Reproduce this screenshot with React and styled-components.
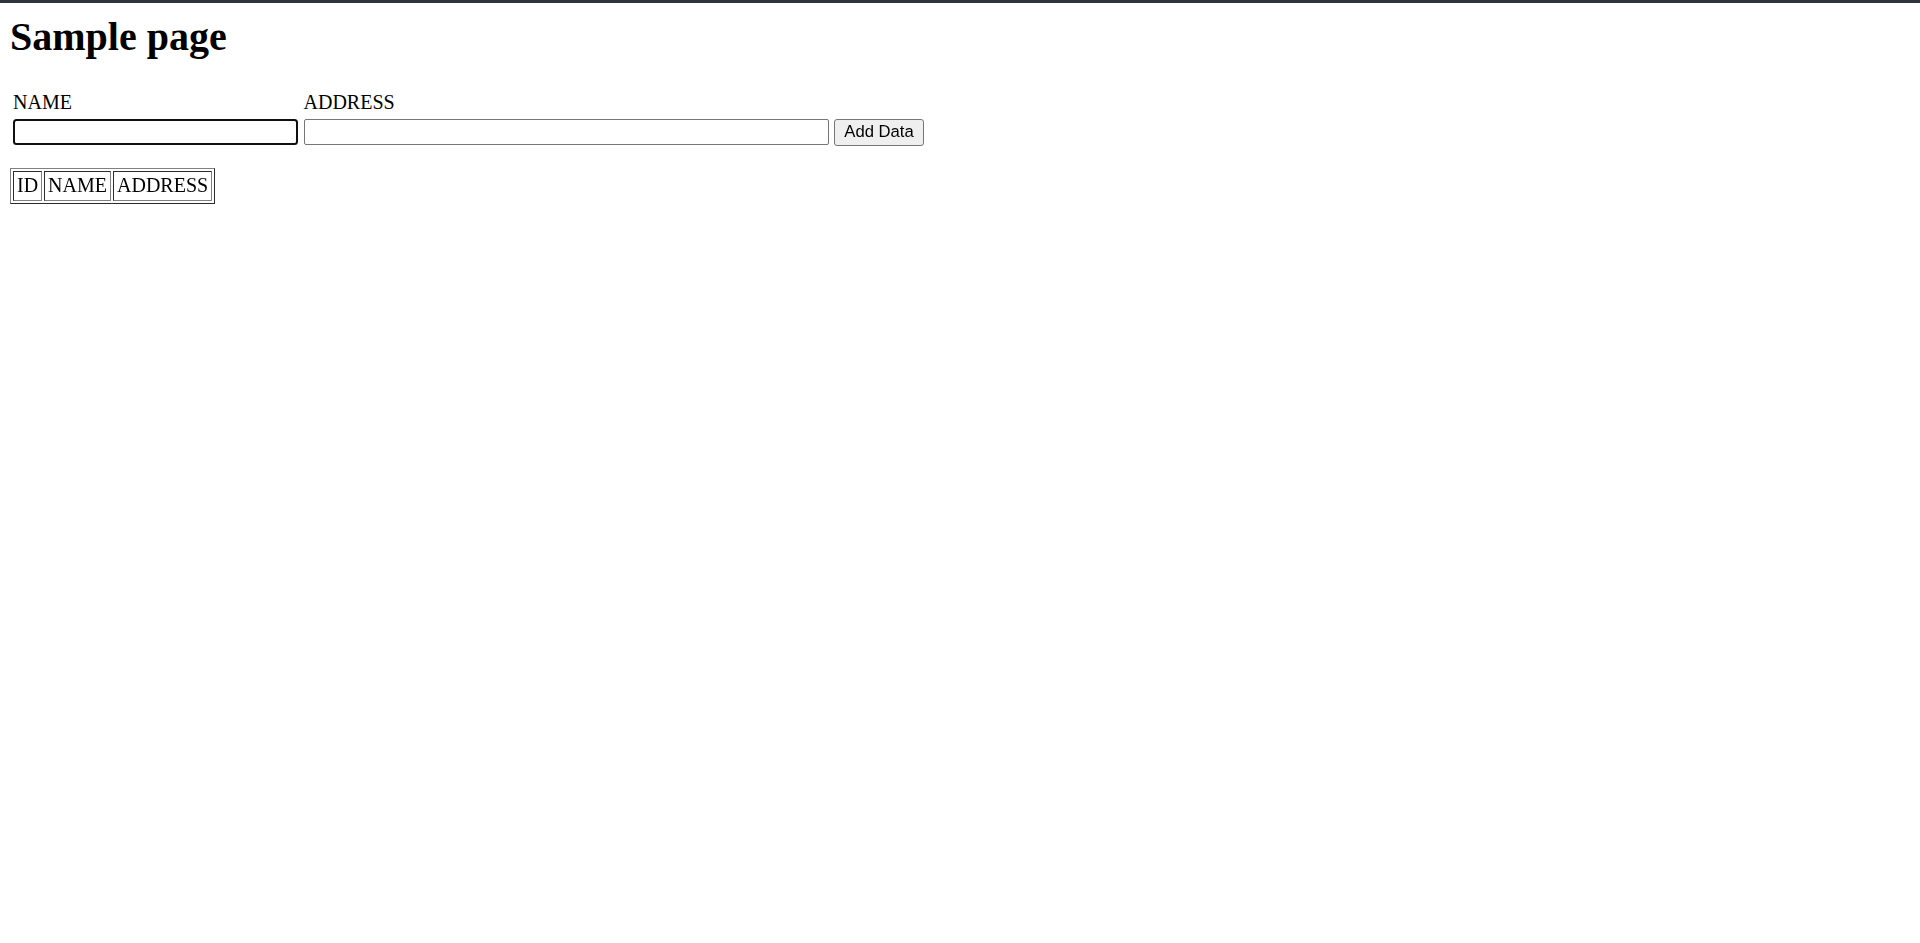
import React from "react";
import styled, { createGlobalStyle } from "styled-components";

const GlobalStyle = createGlobalStyle`
  html, body {
    margin: 0;
    padding: 0;
    background: #ffffff;
  }
  body {
    font-family: "Liberation Serif", "Times New Roman", serif;
    color: #000000;
  }
`;

const TopBar = styled.div`
  height: 3px;
  background: #2d3340;
`;

const Page = styled.main`
  padding: 10.5px 10px;
`;

const Title = styled.h1`
  margin: 0 0 31px;
  font-family: "Liberation Serif", "Times New Roman", serif;
  font-size: 40px;
  line-height: 46px;
  font-weight: 700;
`;

const Form = styled.form`
  display: grid;
  grid-template-columns: 285px 525px auto;
  grid-template-rows: 23px 27px;
  column-gap: 5.5px;
  row-gap: 5px;
  justify-content: start;
  padding-left: 3px;
`;

const Label = styled.label`
  grid-row: 1;
  grid-column: ${(p) => p.$col};
  font-size: 20px;
  line-height: 23px;
`;

const Input = styled.input`
  grid-row: 2;
  grid-column: ${(p) => p.$col};
  box-sizing: border-box;
  width: 100%;
  height: 26px;
  margin: 0;
  padding: 1px 3px;
  font-family: "Liberation Sans", Arial, sans-serif;
  font-size: 16.67px;
  background: #ffffff;
  border: ${(p) => (p.$focused ? "2px solid #101010" : "1px solid #767676")};
  border-radius: ${(p) => (p.$focused ? "3.5px" : "2px")};
  outline: none;
  caret-color: #000000;
  &:focus {
    border: 2px solid #101010;
    border-radius: 3.5px;
  }
`;

const Button = styled.button`
  grid-row: 2;
  grid-column: 3;
  box-sizing: border-box;
  width: 90px;
  height: 27px;
  margin: 0;
  padding: 1px 7px;
  font-family: "Liberation Sans", Arial, sans-serif;
  font-size: 16.67px;
  line-height: 20px;
  color: #000000;
  background: #efefef;
  border: 1px solid #767676;
  border-radius: 3px;
`;

const DataTable = styled.table`
  margin-top: 22px;
  border: 1px outset grey;
  border-spacing: 2.5px;
  font-size: 20px;
  line-height: 23px;
`;

const HeadCell = styled.td`
  border: 1px inset grey;
  padding: 2.5px 3px 3px;
`;

export default function App() {
  const columns = ["ID", "NAME", "ADDRESS"];
  return (
    <>
      <GlobalStyle />
      <TopBar />
      <Page>
        <Title>Sample page</Title>
        <Form onSubmit={(e) => e.preventDefault()}>
          <Label $col="1" htmlFor="name">NAME</Label>
          <Label $col="2" htmlFor="address">ADDRESS</Label>
          <Input $col="1" id="name" type="text" $focused autoFocus />
          <Input $col="2" id="address" type="text" />
          <Button type="submit">Add Data</Button>
        </Form>
        <DataTable>
          <tbody>
            <tr>
              {columns.map((c) => (
                <HeadCell key={c}>{c}</HeadCell>
              ))}
            </tr>
          </tbody>
        </DataTable>
      </Page>
    </>
  );
}
